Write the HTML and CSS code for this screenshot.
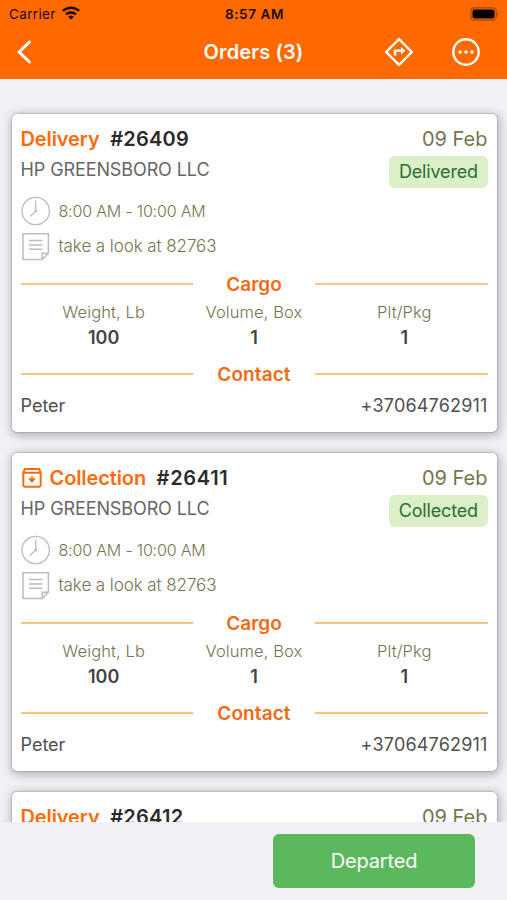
FILE: index.html
```
<!DOCTYPE html>
<html lang="en">
<head>
<meta charset="utf-8">
<title>Orders</title>
<link rel="stylesheet" href="styles.css">
</head>
<body>
<svg width="0" height="0" class="defs" aria-hidden="true">
  <symbol id="clock" viewBox="0 0 30 30"><g fill="none" stroke="#bdbdbd" stroke-width="1.3"><circle cx="14.700" cy="15" r="13.700"/><path d="M14.700 4.500V14M14 15.800l-5 4.600"/><circle cx="14.700" cy="15" r="1.400" fill="#bdbdbd" stroke="none"/></g></symbol>
  <symbol id="note" viewBox="0 0 30 30"><g fill="none" stroke="#bdbdbd" stroke-width="1.500"><path d="M2 2.800h25.400v19.400l-6.200 6.200H2zM27.400 22.200h-6.200v6.200M8 9.500h13.500M8 13.900h13.500M8 18.300h13.500"/></g></symbol>
</svg>
<div class="screen">
  <header class="header">
    <div class="status">
      <div class="carrier"><span>Carrier</span>
        <svg class="wifi" width="18" height="14" viewBox="0 0 18 14" fill="none" stroke="#1a0a00" stroke-width="2.500"><path d="M.9 4.900a11.800 11.800 0 0 1 16.200 0M4 8.400a7.300 7.300 0 0 1 10 0"/><path d="M9 13.600L6.200 10.900a4 4 0 0 1 5.600 0z" fill="#1a0a00" stroke="none"/></svg>
      </div>
      <span class="time">8:57 AM</span>
      <svg class="battery" width="30" height="14" viewBox="0 0 30 14"><rect x=".8" y=".8" width="25.400" height="12.400" rx="3.500" fill="none" stroke="#a84600" stroke-width="1.200"/><rect x="2.500" y="2.500" width="22" height="9" rx="2" fill="#000"/><path d="M27.600 4.800q2 2.200 0 4.400z" fill="#a84600"/></svg>
    </div>
    <div class="nav">
      <svg class="back" width="16" height="26" viewBox="0 0 16 26" fill="none" stroke="#fff" stroke-width="3" stroke-linecap="round" stroke-linejoin="round"><path d="M13.500 3L3 13l10.500 10"/></svg>
      <h1 class="heading">Orders (3)</h1>
      <div class="actions">
        <svg width="30" height="30" viewBox="0 0 30 30" fill="none" stroke="#fff" stroke-width="2.400" stroke-linejoin="round"><path d="M15 2.200L27.800 15 15 27.800 2.200 15z"/><path d="M11 18.500v-4.700h7" stroke-width="2.500" stroke-linejoin="miter"/><path d="M17 10l4.400 3.800L17 17.600z" fill="#fff" stroke="none"/></svg>
        <svg width="30" height="30" viewBox="0 0 30 30"><circle cx="15" cy="15" r="12.700" fill="none" stroke="#fff" stroke-width="2.400"/><g fill="#fff"><circle cx="9" cy="15" r="1.800"/><circle cx="15" cy="15" r="1.800"/><circle cx="21" cy="15" r="1.800"/></g></svg>
      </div>
    </div>
  </header>

  <main class="list">
    <article class="card">
      <div class="title"><span class="kind">Delivery</span><span class="number">#26409</span><span class="date">09 Feb</span></div>
      <div class="company"><span class="name">HP GREENSBORO LLC</span><span class="badge">Delivered</span></div>
      <div class="info"><svg class="icon"><use href="#clock"/></svg><span class="hours">8:00 AM - 10:00 AM</span></div>
      <div class="info info-note"><svg class="icon"><use href="#note"/></svg><span class="remark">take a look at 82763</span></div>
      <div class="divider"><span>Cargo</span></div>
      <dl class="cargo"><div><dt>Weight, Lb</dt><dd>100</dd></div><div><dt>Volume, Box</dt><dd>1</dd></div><div><dt>Plt/Pkg</dt><dd>1</dd></div></dl>
      <div class="divider divider-contact"><span>Contact</span></div>
      <div class="contact"><span>Peter</span><span class="phone">+37064762911</span></div>
    </article>

    <article class="card">
      <div class="title">
        <svg class="box" width="22" height="22" viewBox="0 0 22 22" fill="none" stroke="#ff6a0a" stroke-width="2" stroke-linejoin="round"><path d="M2.300 5.500L4 2h14l1.700 3.500V18a1.800 1.800 0 0 1-1.800 1.800H4.100A1.800 1.800 0 0 1 2.300 18zM2.300 5.800h17.400"/><path d="M11 9v4M8.300 12l2.700 2.900 2.700-2.900z" fill="#ff6a0a" stroke-width="1.500"/></svg>
        <span class="kind">Collection</span><span class="number number-wide">#26411</span><span class="date">09 Feb</span></div>
      <div class="company"><span class="name">HP GREENSBORO LLC</span><span class="badge">Collected</span></div>
      <div class="info"><svg class="icon"><use href="#clock"/></svg><span class="hours">8:00 AM - 10:00 AM</span></div>
      <div class="info info-note"><svg class="icon"><use href="#note"/></svg><span class="remark">take a look at 82763</span></div>
      <div class="divider"><span>Cargo</span></div>
      <dl class="cargo"><div><dt>Weight, Lb</dt><dd>100</dd></div><div><dt>Volume, Box</dt><dd>1</dd></div><div><dt>Plt/Pkg</dt><dd>1</dd></div></dl>
      <div class="divider divider-contact"><span>Contact</span></div>
      <div class="contact"><span>Peter</span><span class="phone">+37064762911</span></div>
    </article>

    <article class="card">
      <div class="title"><span class="kind">Delivery</span><span class="number">#26412</span><span class="date">09 Feb</span></div>
    </article>
  </main>

  <footer class="footer"><button class="departed">Departed</button></footer>
</div>
</body>
</html>
```
FILE: styles.css
```
* { box-sizing: border-box; }
body { margin: 0; font-family: Inter, "Liberation Sans", sans-serif; color: #444; }
.defs { position: absolute; }
svg { display: block; flex: none; }
.screen { height: 900px; display: flex; flex-direction: column; background: #f0f0f5; overflow: hidden; }

.header { flex: none; height: 79px; background: #ff6900; }
.status { height: 27px; padding: 0 7px 0 9px; display: grid; grid-template-columns: 1fr auto 1fr; align-items: center; color: #1a0a00; font-size: 13.5px; }
.carrier { display: flex; align-items: center; gap: 6px; letter-spacing: 0.35px; }
.wifi { margin-top: -2px; }
.time { font-weight: 600; font-size: 13.5px; letter-spacing: 0.6px; }
.battery { justify-self: end; }
.nav { height: 50px; padding: 0 26px 0 16px; display: grid; grid-template-columns: 1fr auto 1fr; align-items: center; }
.heading { margin: 0 0 0 10px; color: #fff; font-size: 20px; font-weight: 600; line-height: 28px; letter-spacing: 0.1px; }
.actions { display: flex; justify-content: flex-end; gap: 37px; }

.list { flex: 1; min-height: 0; overflow: hidden; padding: 35px 10.5px 0 11.5px; }
.card { height: 318px; margin-bottom: 21px; padding: 11px 9px; background: #fff; border-radius: 5px; box-shadow: 0 0 1px 1px rgba(0,0,0,.12), 1px 2px 10px 2px rgba(0,0,0,.24); }
.title { height: 28px; display: flex; align-items: center; font-size: 20px; }
.box { margin-right: 7px; }
.kind { color: #ff6a0a; font-weight: 600; letter-spacing: -0.1px; }
.number { margin-left: 10.500px; color: #2b2b2b; font-weight: 600; letter-spacing: 0.25px; }
.number-wide { letter-spacing: 0.7px; }
.date { margin-left: auto; color: #75754f; }
.company { height: 32px; display: flex; justify-content: space-between; align-items: center; }
.name { color: #666; font-size: 18px; letter-spacing: -0.1px; }
.badge { height: 32px; margin-top: 5px; padding: 0 9.500px; border-radius: 6px; background: #dbefc8; color: #2a7035; font-size: 18px; letter-spacing: -0.15px; line-height: 32px; }
.info { height: 30px; margin-top: 11px; display: flex; align-items: center; gap: 8px; color: #74744f; font-weight: 300; font-size: 16px; }
.info-note { margin-top: 5px; }
.icon { width: 30px; height: 30px; }
.hours { letter-spacing: -0.17px; }
.remark { font-size: 17px; letter-spacing: -0.08px; }
.divider { height: 24px; margin-top: 11px; display: grid; grid-template-columns: 172.5px 1fr 172.5px; align-items: center; text-align: center; color: #f26a12; font-weight: 600; font-size: 19px; }
.divider::before, .divider::after { content: ""; height: 2px; background: #f9c57c; }
.divider-contact { margin-top: 12px; letter-spacing: 0.1px; }
.cargo { margin: 6px 8px 0; display: grid; grid-template-columns: repeat(3, 1fr); text-align: center; }
.cargo dt { height: 20px; line-height: 20px; color: #74744f; font-weight: 300; font-size: 16.5px; letter-spacing: 0.1px; }
.cargo dd { height: 24px; margin: 4px 0 0; line-height: 24px; color: #444; font-weight: 600; font-size: 18px; }
.contact { height: 24px; margin-top: 7px; display: flex; justify-content: space-between; align-items: center; font-size: 18px; color: #505050; }
.phone { letter-spacing: 0.18px; }

.footer { flex: none; height: 78px; padding: 12px 32px; display: flex; justify-content: flex-end; align-items: flex-start; background: #f0f0f5; }
.departed { width: 202px; height: 54px; border: 0; border-radius: 6px; background: #5cb85c; color: #fff; font: 400 20px Inter, sans-serif; letter-spacing: -0.15px; }
```
